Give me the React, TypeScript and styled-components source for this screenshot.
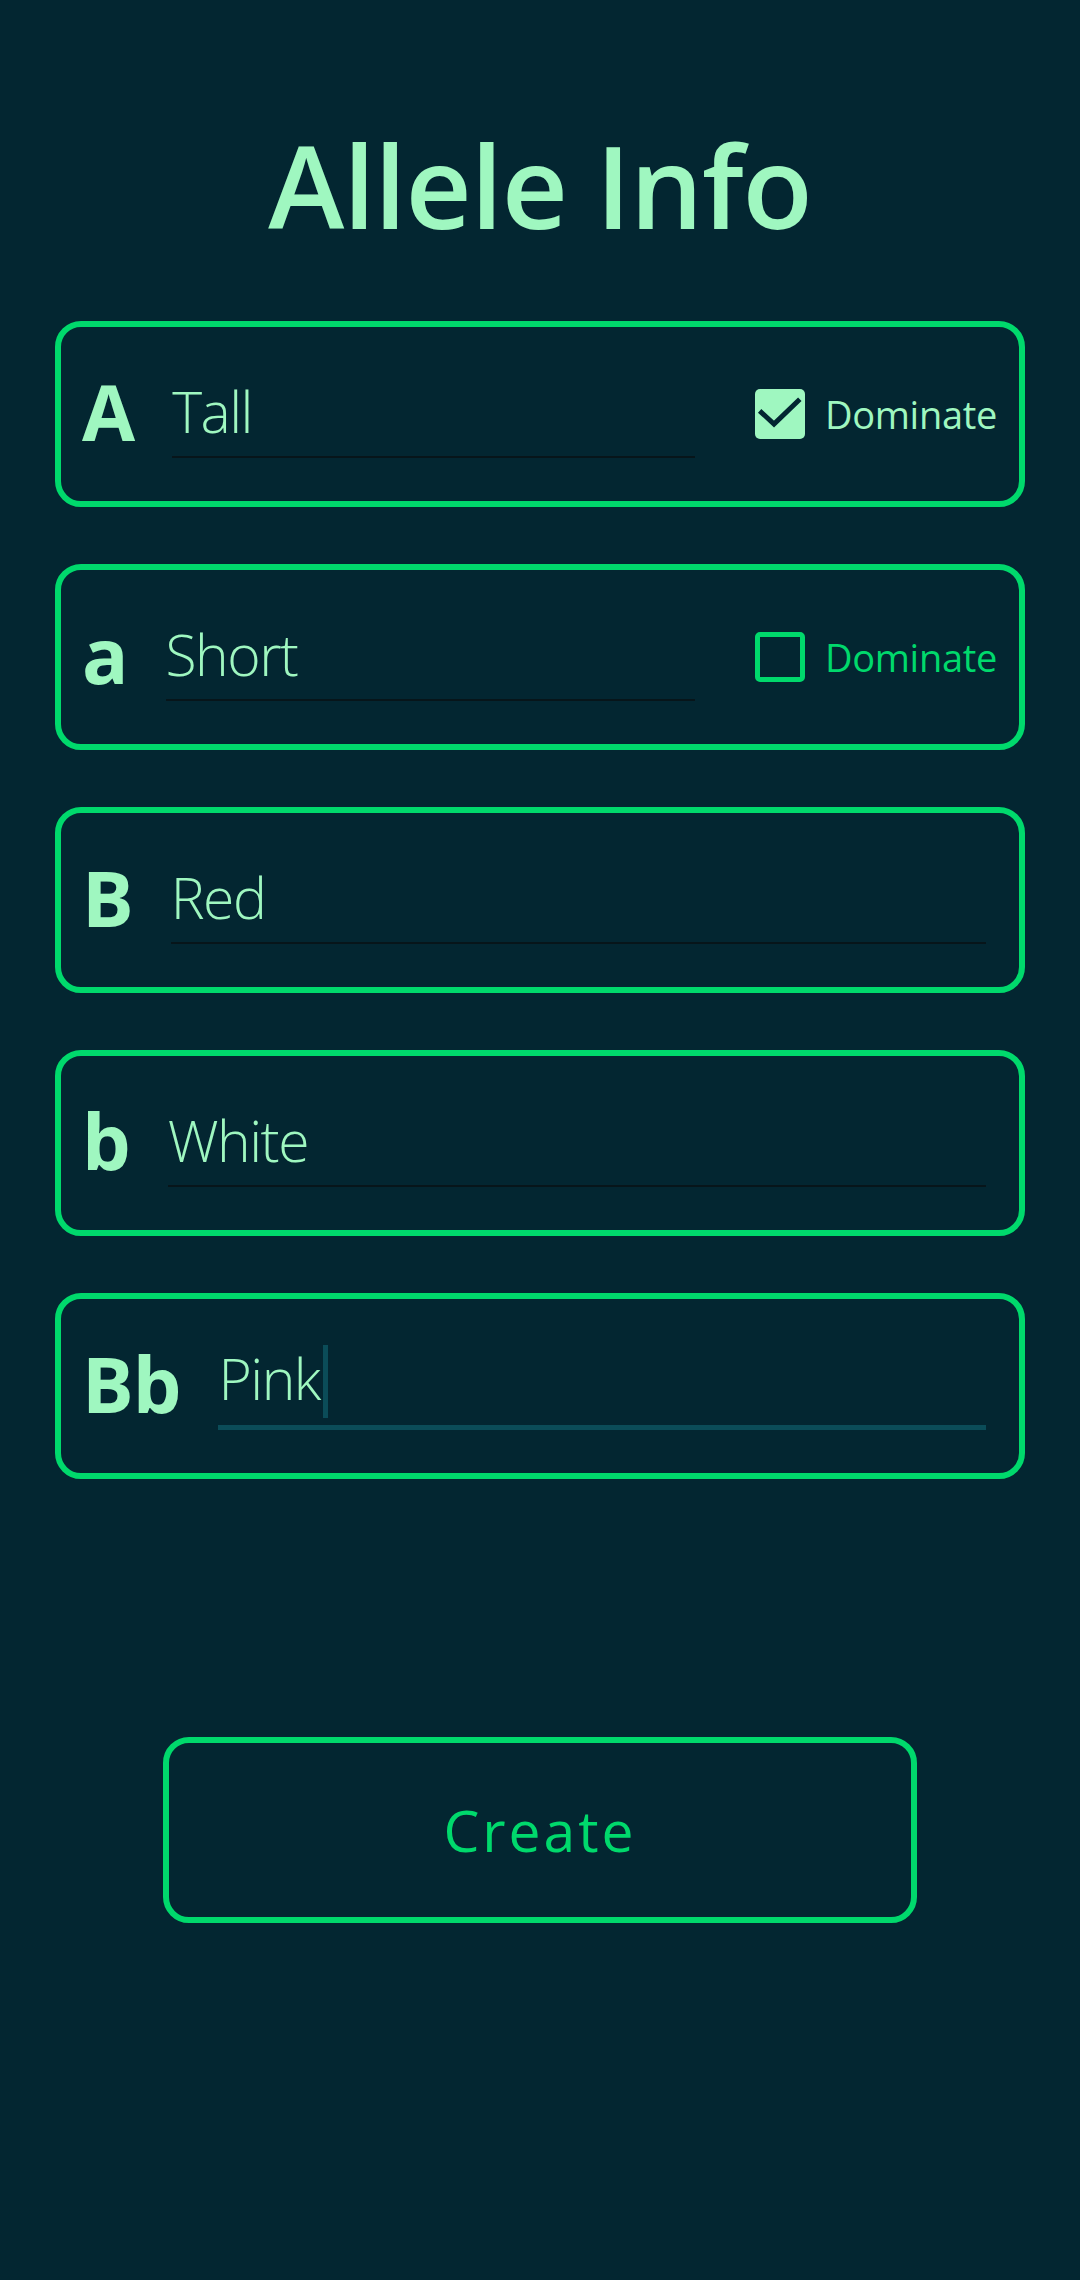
import React from "react";
import styled, { createGlobalStyle } from "styled-components";

const MINT = "#9ff7c0";
const GREEN = "#00d96c";
const BG = "#032631";

const GlobalStyle = createGlobalStyle`
  html, body {
    margin: 0;
    padding: 0;
    background: ${BG};
  }
  body {
    font-family: "Open Sans", "Noto Sans", sans-serif;
  }
`;

const Screen = styled.div`
  min-height: 2280px;
  box-sizing: border-box;
  padding-top: 116px;
  display: flex;
  flex-direction: column;
  align-items: center;
  background: ${BG};
`;

const Title = styled.h1`
  margin: 0;
  font-size: 115px;
  line-height: 1.2;
  font-weight: 600;
  color: ${MINT};
  letter-spacing: -1px;
`;

const List = styled.div`
  margin-top: 67px;
  width: 970px;
  display: flex;
  flex-direction: column;
  gap: 57px;
`;

const Card = styled.div`
  height: 186px;
  box-sizing: border-box;
  border: 6px solid ${GREEN};
  border-radius: 26px;
  display: flex;
  align-items: center;
  padding: 0 22px 0 21px;
`;

const Label = styled.div`
  font-size: 77px;
  line-height: 1;
  font-weight: 700;
  color: ${MINT};
  margin-right: 38px;
  margin-bottom: 6px;
  letter-spacing: -1px;
`;

const Field = styled.div<{ $focused?: boolean }>`
  flex: 1;
  height: ${(p) => (p.$focused ? 90 : 88)}px;
  box-sizing: border-box;
  margin-right: 11px;
  padding: ${(p) => (p.$focused ? "4px 0 13px" : "7px 0 11px")};
  border-bottom: ${(p) => (p.$focused ? "5px solid #0b4c58" : "2px solid #07151a")};
  display: flex;
  align-items: flex-start;
  margin-top: ${(p) => (p.$focused ? "-2px" : "0")};
`;

const Value = styled.span`
  font-size: 57px;
  line-height: 1.2;
  font-weight: 300;
  color: ${MINT};
  white-space: nowrap;
  letter-spacing: -1.5px;
`;

const Caret = styled.span`
  width: 5px;
  height: 73px;
  margin-left: 3px;
  margin-top: 1px;
  background: #0b4c58;
`;

const Toggle = styled.label`
  display: flex;
  align-items: center;
  gap: 20px;
  margin-left: 49px;
`;

const Box = styled.span<{ $checked: boolean }>`
  width: 50px;
  height: 50px;
  box-sizing: border-box;
  border-radius: 5px;
  background: ${(p) => (p.$checked ? MINT : "transparent")};
  border: ${(p) => (p.$checked ? "none" : `5px solid ${GREEN}`)};
  display: flex;
  align-items: center;
  justify-content: center;
`;

const ToggleText = styled.span<{ $checked: boolean }>`
  font-size: 38px;
  font-weight: 400;
  letter-spacing: -0.3px;
  color: ${(p) => (p.$checked ? MINT : GREEN)};
`;

const CreateButton = styled.button`
  margin-top: 258px;
  width: 754px;
  height: 186px;
  box-sizing: border-box;
  border: 6px solid ${GREEN};
  border-radius: 26px;
  background: transparent;
  color: ${GREEN};
  font-family: "Open Sans", "Noto Sans", sans-serif;
  font-size: 57px;
  font-weight: 400;
  letter-spacing: 3px;
  padding: 0;
  cursor: pointer;
`;

type Allele = {
  key: string;
  label: string;
  value: string;
  dominate?: boolean;
  focused?: boolean;
};

const alleles: Allele[] = [
  { key: "A", label: "A", value: "Tall", dominate: true },
  { key: "a", label: "a", value: "Short", dominate: false },
  { key: "B", label: "B", value: "Red" },
  { key: "b", label: "b", value: "White" },
  { key: "Bb", label: "Bb", value: "Pink", focused: true },
];

const Check = () => (
  <svg width="50" height="50" viewBox="0 0 50 50">
    <polyline
      points="6.5,23.5 19,35 43,12"
      fill="none"
      stroke={BG}
      strokeWidth="5"
      strokeLinecap="square"
    />
  </svg>
);

export default function App() {
  return (
    <>
      <GlobalStyle />
      <Screen>
        <Title>Allele Info</Title>
        <List>
          {alleles.map((a) => (
            <Card key={a.key}>
              <Label>{a.label}</Label>
              <Field $focused={a.focused}>
                <Value>{a.value}</Value>
                {a.focused && <Caret />}
              </Field>
              {a.dominate !== undefined && (
                <Toggle>
                  <Box $checked={a.dominate}>{a.dominate && <Check />}</Box>
                  <ToggleText $checked={a.dominate}>Dominate</ToggleText>
                </Toggle>
              )}
            </Card>
          ))}
        </List>
        <CreateButton>Create</CreateButton>
      </Screen>
    </>
  );
}
